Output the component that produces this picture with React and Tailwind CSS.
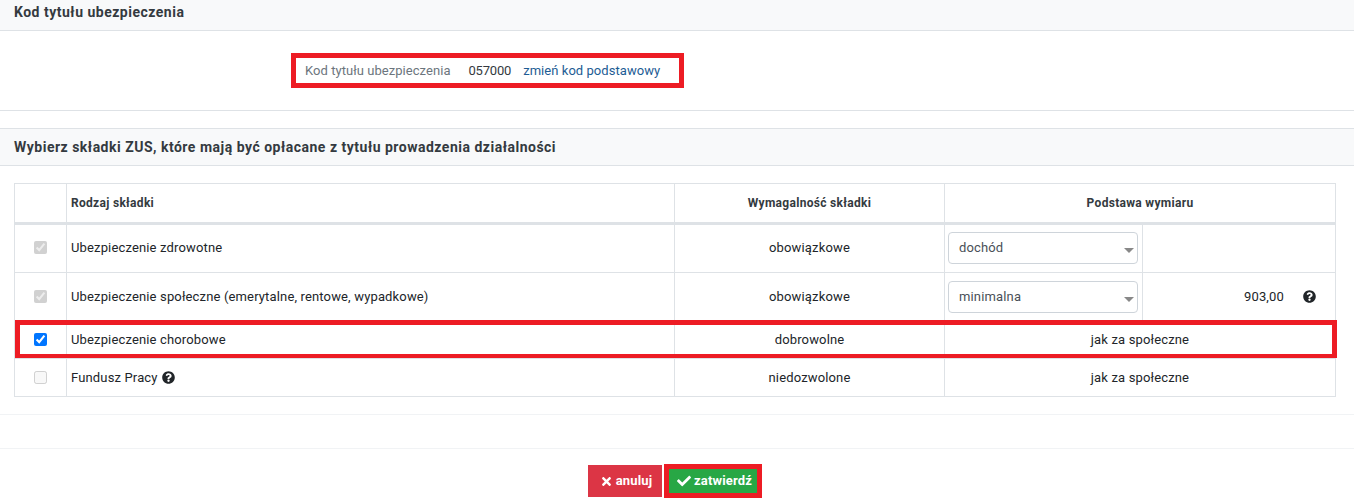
import React from 'react';
import { FaQuestionCircle, FaTimes, FaCheck } from 'react-icons/fa';

const Select = ({ value }) => (
  <div className="relative h-[32px] w-[190px] rounded-[4px] border border-[#ced4da] bg-white pl-[10px] leading-[30px] text-[#495057]">
    {value}
    <span className="absolute right-[3px] top-[15px] h-0 w-0 border-x-[5px] border-t-[5px] border-x-transparent border-t-[#888]" />
  </div>
);

const SectionHeader = ({ children, className }) => (
  <div className={`flex items-center border-b border-[#dee2e6] bg-[#f8f9fa] pl-[14px] text-[14px] font-bold tracking-[0.5px] text-[#343a40] ${className}`}>
    {children}
  </div>
);

const cell = 'border border-[#dee2e6] p-0';
const check = 'mb-[2px] align-middle';

const App = () => {
  return (
    <div className="relative h-[499px] w-[1354px] overflow-hidden bg-white font-['Roboto','Liberation_Sans',sans-serif] text-[13px] tracking-[0.15px] text-[#212529]">
      <SectionHeader className="h-[31px] pb-[6px]">Kod tytułu ubezpieczenia</SectionHeader>

      <div className="h-[80px] border-b border-[#dee2e6] pl-[291px] pt-[22px]">
        <div className="flex h-[35px] w-[393px] items-center border-[5px] border-[#ed1c24] pl-[9px] tracking-[0.05px]">
          <span className="text-[#6c757d]">Kod tytułu ubezpieczenia</span>
          <span className="ml-[18px] tracking-[-0.2px] text-[#343a40]">057000</span>
          <span className="ml-[12px] text-[#1d5c94]">zmień kod podstawowy</span>
        </div>
      </div>

      <SectionHeader className="mt-[17px] h-[38px] border-t">
        Wybierz składki ZUS, które mają być opłacane z tytułu prowadzenia działalności
      </SectionHeader>

      <div className="pl-[14px] pt-[17px]">
        <table className="w-[1322px] table-fixed border-collapse">
          <colgroup>
            <col className="w-[52px]" />
            <col className="w-[608px]" />
            <col className="w-[270px]" />
            <col className="w-[198px]" />
            <col />
          </colgroup>
          <thead>
            <tr className="h-[40px] border-b-[3px] border-[#dee2e6] text-[12px] font-bold tracking-[0.3px] text-[#343a40]">
              <th className={cell} />
              <th className={`${cell} pl-[4px] text-left`}>Rodzaj składki</th>
              <th className={`${cell} text-center`}>Wymagalność składki</th>
              <th className={`${cell} text-center`} colSpan={2}>Podstawa wymiaru</th>
            </tr>
          </thead>
          <tbody>
            <tr className="h-[49px]">
              <td className={`${cell} pb-[2px] text-center`}><input className={check} type="checkbox" checked disabled readOnly /></td>
              <td className={`${cell} pb-[2px] pl-[4px]`}>Ubezpieczenie zdrowotne</td>
              <td className={`${cell} pb-[2px] text-center`}>obowiązkowe</td>
              <td className={`${cell} pb-[2px] pl-[3px]`}><Select value="dochód" /></td>
              <td className={cell} />
            </tr>
            <tr className="h-[48px]">
              <td className={`${cell} text-center`}><input className={check} type="checkbox" checked disabled readOnly /></td>
              <td className={`${cell} pl-[4px]`}>Ubezpieczenie społeczne (emerytalne, rentowe, wypadkowe)</td>
              <td className={`${cell} text-center`}>obowiązkowe</td>
              <td className={`${cell} pl-[3px]`}><Select value="minimalna" /></td>
              <td className={cell}>
                <div className="flex items-center justify-end pr-[19px]">
                  <span>903,00</span>
                  <FaQuestionCircle className="ml-[19px] text-[13px] text-[#212529]" />
                </div>
              </td>
            </tr>
            <tr className="h-[38px]">
              <td className={`${cell} text-center`}><input className={check} type="checkbox" defaultChecked /></td>
              <td className={`${cell} pl-[4px]`}>Ubezpieczenie chorobowe</td>
              <td className={`${cell} text-center`}>dobrowolne</td>
              <td className={`${cell} text-center`} colSpan={2}>jak za społeczne</td>
            </tr>
            <tr className="h-[38px]">
              <td className={`${cell} text-center`}><input className={check} type="checkbox" disabled readOnly /></td>
              <td className={`${cell} pl-[4px]`}>
                <span className="inline-flex items-center gap-[4px]">
                  Fundusz Pracy
                  <FaQuestionCircle className="text-[13px] text-[#212529]" />
                </span>
              </td>
              <td className={`${cell} text-center`}>niedozwolone</td>
              <td className={`${cell} text-center`} colSpan={2}>jak za społeczne</td>
            </tr>
          </tbody>
        </table>
      </div>

      <div className="mt-[17px] h-[35px] border-y border-[#f1f3f5]" />

      <div className="flex items-center justify-center pr-[4px] pt-[15px]">
        <button className="flex h-[32px] w-[74px] items-center justify-center gap-[3px] bg-[#dc3545] pl-[2px] font-bold text-white">
          <FaTimes className="text-[13px]" />
          anuluj
        </button>
        <div className="ml-[2px] border-[5px] border-[#ed1c24]">
          <button className="flex h-[24px] w-[88px] items-center justify-center gap-[3px] bg-[#28a745] pl-[3px] font-bold text-white">
            <FaCheck className="text-[14px]" />
            zatwierdź
          </button>
        </div>
      </div>

      {/* czerwona ramka nad wierszem */}
      <div className="pointer-events-none absolute left-[15px] top-[320px] h-[38px] w-[1322px] border-[5px] border-b-4 border-[#ed1c24]" />
    </div>
  );
};

export default App;
